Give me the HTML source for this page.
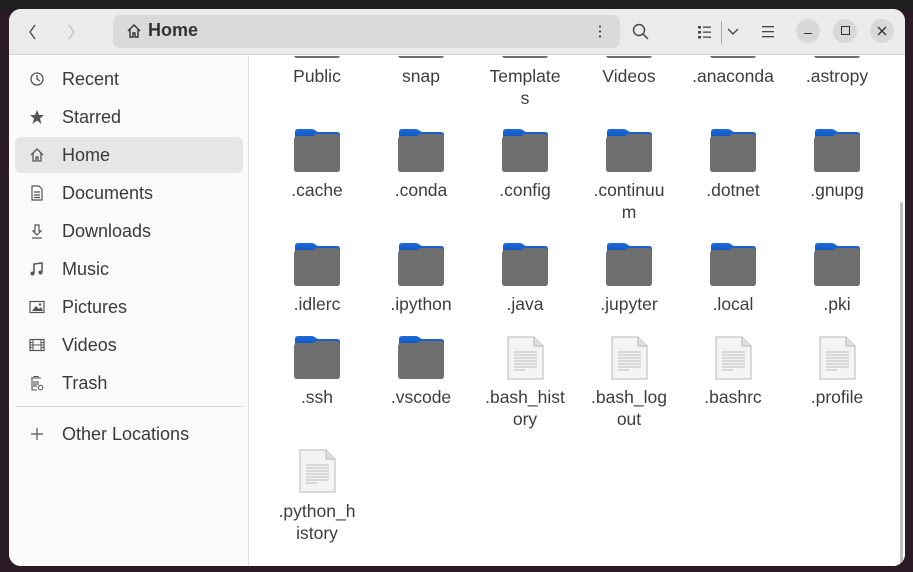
<!DOCTYPE html>
<html><head><style>
*{margin:0;padding:0;box-sizing:border-box}
body{width:913px;height:572px;background:#2a1a24;position:relative;overflow:hidden;font-family:"Liberation Sans","DejaVu Sans",sans-serif;color:#3a3a3a}
.topbar{position:absolute;left:0;top:0;width:913px;height:12px;background:#1e1e1e}
.win{position:absolute;left:9px;top:9px;width:896px;height:557px;background:#fff;border-radius:12px;overflow:hidden}
.hdr{position:absolute;left:0;top:0;width:896px;height:46px;background:#ebebeb;border-bottom:1px solid #d6d6d6}
.side{position:absolute;left:0;top:47px;width:240px;height:510px;background:#fafafa;border-right:1px solid #dcdcdc}
.content{position:absolute;left:241px;top:47px;width:655px;height:510px;overflow:hidden;background:#fff}
.si{position:absolute;left:6px;width:228px;height:36px;border-radius:6px;font-size:18px;line-height:36px;padding-left:47px;color:#3a3a3a}
.si svg{position:absolute;left:14px;top:10px}
.it{position:absolute;width:104px;text-align:center;font-size:17.5px;line-height:22px;color:#3d3d3d}
.fold{position:absolute;width:48px;height:44px}
.btn{position:absolute;top:10px;width:24px;height:24px;border-radius:12px;background:#d8d8d8}
</style></head><body>
<div class="topbar"></div>
<div class="win">
 <div class="hdr">
  <svg style="position:absolute;left:19px;top:15px" width="10" height="16"><path d="M7 1 L2 8 L7 15" stroke="#444" stroke-width="1.3" fill="none"/></svg>
  <svg style="position:absolute;left:58px;top:15px" width="10" height="16"><path d="M2 1 L7 8 L2 15" stroke="#bbb" stroke-width="1.3" fill="none"/></svg>
  <div style="position:absolute;left:104px;top:6px;width:507px;height:33px;background:#dadada;border-radius:7px"></div>
  <svg style="position:absolute;left:117px;top:14px" width="16" height="16"><path d="M2 8 L8 2 L14 8 M4 6 V14 H7 V10 H9 V14 H12 V6" stroke="#333" stroke-width="1.4" fill="none"/></svg>
  <div style="position:absolute;left:139px;top:11px;font-size:18px;font-weight:bold;color:#333">Home</div>
  <div style="position:absolute;left:590px;top:15px;width:2px;height:14px;background:radial-gradient(circle,#444 1px,transparent 1.2px) 0 0/2px 5px"></div>
  <svg style="position:absolute;left:623px;top:14px" width="18" height="18"><circle cx="7" cy="7" r="5.5" stroke="#444" stroke-width="1.4" fill="none"/><path d="M11 11 L16 16" stroke="#444" stroke-width="1.5"/></svg>
  <svg style="position:absolute;left:689px;top:16px" width="14" height="14"><g fill="#444"><rect x="0" y="1" width="3" height="2.5"/><rect x="0" y="6" width="3" height="2.5"/><rect x="0" y="11" width="3" height="2.5"/><rect x="5" y="1.5" width="8" height="1.3"/><rect x="5" y="6.5" width="8" height="1.3"/><rect x="5" y="11.5" width="8" height="1.3"/></g></svg>
  <div style="position:absolute;left:712px;top:12px;width:1px;height:23px;background:#aaa"></div>
  <svg style="position:absolute;left:718px;top:19px" width="12" height="8"><path d="M1 1 L6 6 L11 1" stroke="#444" stroke-width="1.3" fill="none"/></svg>
  <svg style="position:absolute;left:753px;top:16px" width="12" height="13"><g fill="#444"><rect y="1" width="12" height="1.3"/><rect y="6" width="12" height="1.3"/><rect y="11" width="12" height="1.3"/></g></svg>
  <div class="btn" style="left:787px"><div style="position:absolute;left:8px;top:14px;width:8px;height:1.4px;background:#333"></div></div>
  <div class="btn" style="left:824px"><div style="position:absolute;left:8px;top:7px;width:9px;height:9px;border:1.4px solid #333"></div></div>
  <div class="btn" style="left:861px"><svg style="position:absolute;left:7px;top:7px" width="10" height="10"><path d="M1 1 L9 9 M9 1 L1 9" stroke="#333" stroke-width="1.4"/></svg></div>
 </div>
 <div class="side">
  <div class="si" style="top:5px"><svg width="16" height="16"><circle cx="8" cy="8" r="6" stroke="#555" stroke-width="1.3" fill="none"/><path d="M8 4 V8 L11 10" stroke="#555" stroke-width="1.3" fill="none"/></svg>Recent</div>
  <div class="si" style="top:43px"><svg width="16" height="16"><path d="M8 1 L10 6 L15 6 L11 9.5 L12.5 15 L8 11.5 L3.5 15 L5 9.5 L1 6 L6 6Z" fill="#555"/></svg>Starred</div>
  <div class="si" style="top:81px;background:#e6e6e6"><svg width="16" height="16"><path d="M2 8 L8 2 L14 8 M4 6 V14 H7 V10 H9 V14 H12 V6" stroke="#555" stroke-width="1.3" fill="none"/></svg>Home</div>
  <div class="si" style="top:119px"><svg width="16" height="16"><path d="M3 1 H10 L13 4 V15 H3Z M5 7 H11 M5 10 H11 M5 12.5 H11" stroke="#555" stroke-width="1.2" fill="none"/></svg>Documents</div>
  <div class="si" style="top:157px"><svg width="16" height="16"><path d="M6 2 H10 V8 H12 L8 12 L4 8 H6Z M3 15 H13" stroke="#555" stroke-width="1.2" fill="none"/></svg>Downloads</div>
  <div class="si" style="top:195px"><svg width="16" height="16"><path d="M5 12 V3 L13 2 V11" stroke="#555" stroke-width="1.5" fill="none"/><circle cx="3.5" cy="12.5" r="2" fill="#555"/><circle cx="11.5" cy="11.5" r="2" fill="#555"/></svg>Music</div>
  <div class="si" style="top:233px"><svg width="16" height="16"><rect x="1" y="2.5" width="14" height="11" stroke="#555" stroke-width="1.2" fill="none"/><path d="M3 12 L7 7 L10 10 L12 8 L14 12Z" fill="#555"/><circle cx="11" cy="5.5" r="1.2" fill="#555"/></svg>Pictures</div>
  <div class="si" style="top:271px"><svg width="16" height="16"><rect x="1" y="2.5" width="14" height="11" stroke="#555" stroke-width="1.2" fill="none"/><path d="M4 3 V13 M12 3 V13 M1 8 H15 M1 5.5 H4 M1 10.5 H4 M12 5.5 H15 M12 10.5 H15" stroke="#555" stroke-width="1"/></svg>Videos</div>
  <div class="si" style="top:309px"><svg width="16" height="16"><path d="M2 3 H12 M5 3 V1.5 H9 V3 M3 3 V15 H8 M5 6 V12 M7 6 V12 M9 6 V10" stroke="#555" stroke-width="1.1" fill="none"/><circle cx="11.5" cy="12.5" r="2.3" stroke="#555" fill="none"/></svg>Trash</div>
  <div style="position:absolute;left:6px;top:350px;width:228px;height:1px;background:#d8d8d8"></div>
  <div class="si" style="top:360px"><svg width="16" height="16"><path d="M8 2 V14 M2 8 H14" stroke="#555" stroke-width="1.2"/></svg>Other Locations</div>
 </div>
 <div class="content">
  <div style="position:absolute;right:2px;top:146px;width:3px;height:364px;background:#bdbdbd;border-radius:2px"></div>
 </div>
</div>
<svg width="0" height="0" style="position:absolute">
 <defs>
  <linearGradient id="gb" x1="0" y1="0" x2="0" y2="1"><stop offset="0" stop-color="#1d6ad8"/><stop offset="1" stop-color="#0a4fb8"/></linearGradient>
  <symbol id="F" viewBox="0 0 48 44"><path d="M2 3 Q2 0 5 0 H18 Q21 0 23 2 L25 3 H44 Q47 3 47 6 V12 H2Z" fill="url(#gb)"/><path d="M1 11 Q1 7 5 7 H20 L23 5 H43 Q47 5 47 9 V40 Q47 43 44 43 H4 Q1 43 1 40Z" fill="#6f6f6f"/></symbol>
  <symbol id="D" viewBox="0 0 48 44"><path d="M7 1 H33 L42 10 V43 H7Z" fill="#f4f4f4" stroke="#b8b8b8"/><path d="M33 1 V10 H42" fill="#e0e0e0" stroke="#b8b8b8"/><path d="M13 16 H36 M13 19 H36 M13 22 H36 M13 25 H36 M13 28 H36 M13 31 H36 M13 34 H24" stroke="#a8a8a8" stroke-width="0.8"/></symbol>
 </defs>
</svg>
<div id="grid" style="position:absolute;left:250px;top:56px;width:650px;height:510px;overflow:hidden">
</div>
<script>
var cols=[317,421,525,629,733,837];
var rows=[
 {iy:15,ly:76,items:[["Public","F"],["snap","F"],["Template<br>s","F"],["Videos","F"],[".anaconda","F"],[".astropy","F"]]},
 {iy:129,ly:190,items:[[".cache","F"],[".conda","F"],[".config","F"],[".continuu<br>m","F"],[".dotnet","F"],[".gnupg","F"]]},
 {iy:243,ly:304,items:[[".idlerc","F"],[".ipython","F"],[".java","F"],[".jupyter","F"],[".local","F"],[".pki","F"]]},
 {iy:336,ly:397,items:[[".ssh","F"],[".vscode","F"],[".bash_hist<br>ory","D"],[".bash_log<br>out","D"],[".bashrc","D"],[".profile","D"]]},
 {iy:449,ly:511,items:[[".python_h<br>istory","D"]]}
];
var g=document.getElementById('grid'),h='';
rows.forEach(function(r){r.items.forEach(function(it,i){var cx=cols[i]-250;
h+='<svg class="fold" style="left:'+(cx-24)+'px;top:'+(r.iy-56)+'px" viewBox="0 0 48 44"><use href="#'+it[1]+'"/></svg>';
h+='<div class="it" style="left:'+(cx-52)+'px;top:'+(r.ly-56-11)+'px">'+it[0]+'</div>';});});
g.innerHTML=h;
</script>
</body></html>
